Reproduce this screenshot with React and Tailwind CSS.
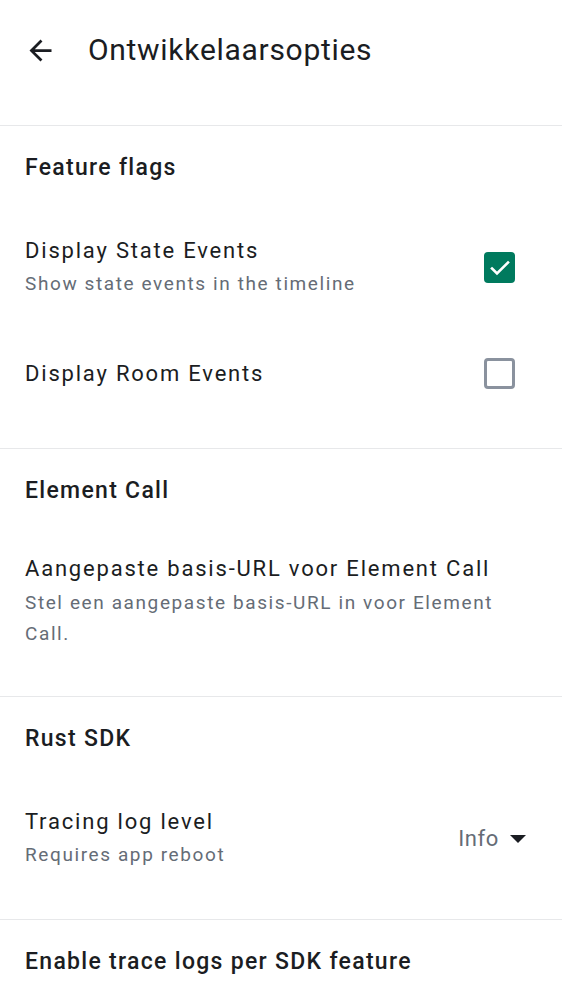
import React from 'react';

const font = { fontFamily: 'Roboto, "Noto Sans", sans-serif' };

function Checkbox({ checked }) {
  if (checked) {
    return (
      <div className="w-[31px] h-[31px] rounded-[4px] bg-[#007a5e] flex items-center justify-center">
        <svg width="24" height="24" viewBox="0 0 24 24" fill="none">
          <path d="M4 12.5l5 5L20 6.5" stroke="white" strokeWidth="2.6" strokeLinecap="square" />
        </svg>
      </div>
    );
  }
  return <div className="w-[31px] h-[31px] rounded-[4px] border-[3px] border-[#8a929e] bg-white" />;
}

function SectionTitle({ children }) {
  return (
    <div className="pt-[28px] text-[23px] leading-[28px] font-medium tracking-[1.3px] text-[#1b1d22]">
      {children}
    </div>
  );
}

function Divider() {
  return <div className="h-px bg-[#e7e8ea]" />;
}

const itemTitle = 'text-[22px] leading-[30px] tracking-[1.8px] text-[#1b1d22]';
const itemSub = 'mt-[3px] text-[19px] leading-[30px] tracking-[1.6px] text-[#656c76]';

export default function App() {
  return (
    <div className="w-[562px] h-[1000px] bg-white overflow-hidden" style={font}>
      {/* Top bar */}
      <div className="h-[125px]">
        <div className="flex items-center h-[100px] pl-[24px]">
          <svg width="33" height="33" viewBox="0 0 24 24" className="text-[#1b1d22]">
            <path fill="currentColor" d="M20 11H7.83l5.59-5.59L12 4l-8 8 8 8 1.41-1.41L7.83 13H20v-2z" />
          </svg>
          <span className="ml-[31px] text-[30px] leading-[34px] tracking-[0.7px] text-[#1b1d22]">Ontwikkelaarsopties</span>
        </div>
      </div>
      <Divider />

      {/* Feature flags */}
      <div className="px-[25px] pb-[59px]">
        <SectionTitle>Feature flags</SectionTitle>
        <div className="flex items-center mt-[54px]">
          <div className="flex-1">
            <div className={itemTitle}>Display State Events</div>
            <div className={itemSub}>Show state events in the timeline</div>
          </div>
          <div className="mr-[22px]"><Checkbox checked /></div>
        </div>
        <div className="flex items-center mt-[59px]">
          <div className={`flex-1 ${itemTitle}`}>Display Room Events</div>
          <div className="mr-[22px]"><Checkbox /></div>
        </div>
      </div>
      <Divider />

      {/* Element Call */}
      <div className="px-[25px] pb-[47px]">
        <SectionTitle>Element Call</SectionTitle>
        <div className="mt-[49px] pr-[40px]">
          <div className={itemTitle}>Aangepaste basis-URL voor Element Call</div>
          <div className="mt-[3px] text-[19px] leading-[31px] tracking-[1.6px] text-[#656c76]">
            Stel een aangepaste basis-URL in voor Element Call.
          </div>
        </div>
      </div>
      <Divider />

      {/* Rust SDK */}
      <div className="px-[25px] pb-[49px]">
        <SectionTitle>Rust SDK</SectionTitle>
        <div className="flex items-center mt-[54px]">
          <div className="flex-1">
            <div className={itemTitle}>Tracing log level</div>
            <div className={itemSub}>Requires app reboot</div>
          </div>
          <div className="flex items-center mr-[11px]">
            <span className="text-[22px] leading-[30px] tracking-[0.6px] text-[#656c76]">Info</span>
            <svg width="16" height="8" viewBox="0 0 16 8" className="ml-[11px]">
              <path d="M0 0h16L8 8z" fill="#1b1d22" />
            </svg>
          </div>
        </div>
      </div>
      <Divider />

      <div className="px-[25px]">
        <SectionTitle>Enable trace logs per SDK feature</SectionTitle>
      </div>
    </div>
  );
}
